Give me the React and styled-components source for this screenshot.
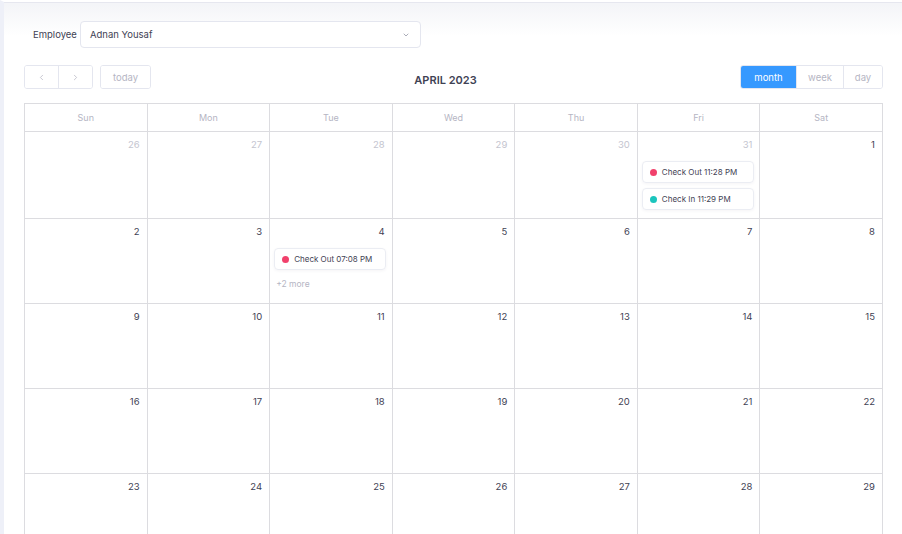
import React from 'react';
import styled, {createGlobalStyle, css} from 'styled-components';

const text_color = "#3f4254";
const muted_color = "#b5b5c3";
const border_color = "#dcdce0";
const input_border = "#e4e6ef";
const primary_color = "#3699ff";
const font_family = "'Inter', 'Noto Sans', sans-serif";

const GlobalStyle = createGlobalStyle`
  html, body{
    margin: 0;
    padding: 0;
    background: #fff;
    font-family: ${font_family};
  }
`;

const Page = styled.div`
  display: flex;
  height: 534px;
  overflow: hidden;
  border-left: 4px solid #eef0f8;
  background: linear-gradient(#f4f5f8 3px, #ffffff 34px);
  border-top: 2px solid #fff;
  box-shadow: inset 0 1px 0 #e6e7ef;
`;

const Content = styled.div`
  flex: 1;
  padding: 19px 20px 0 20px;
  display: flex;
  flex-direction: column;
`;

const FilterRow = styled.div`
  display: flex;
  align-items: center;
  padding-left: 9px;
  label{
    font-size: 9.5px;
    color: ${text_color};
    margin-right: 3px;
  }
`;

const Select = styled.div`
  width: 341px;
  height: 27px;
  box-sizing: border-box;
  border: 1px solid ${input_border};
  border-radius: 4px;
  display: flex;
  align-items: center;
  justify-content: space-between;
  padding: 0 10px 0 9px;
  font-size: 9.5px;
  color: ${text_color};
  background: #fff;
  svg{
    color: #9a9cab;
  }
`;

const Toolbar = styled.div`
  display: flex;
  justify-content: space-between;
  align-items: center;
  margin-top: 17px;
  height: 24px;
`;

const Group = styled.div`
  display: flex;
  align-items: center;
  gap: 7px;
`;

const ButtonGroup = styled.div`
  display: flex;
  border: 1px solid ${input_border};
  border-radius: 3px;
  overflow: hidden;
`;

const Btn = styled.button`
  border: none;
  margin: 0;
  outline: none;
  box-sizing: border-box;
  height: 22px;
  width: ${props => props.width || "auto"};
  padding: 0;
  background: #fff;
  color: ${muted_color};
  font-family: ${font_family};
  font-size: 9.5px;
  display: flex;
  align-items: center;
  justify-content: center;
  & + &{
    border-left: 1px solid ${input_border};
  }
  ${props => props.active && css`
    background: ${primary_color};
    color: #fff;
  `}
`;

const Title = styled.h2`
  margin: 0;
  font-size: 11px;
  font-weight: 600;
  color: ${text_color};
  padding-top: 6px;
`;

const Calendar = styled.div`
  margin-top: 14px;
  width: 858px;
  display: grid;
  grid-template-columns: repeat(7, 1fr);
  grid-template-rows: 28px 87px repeat(4, 85px);
  border-left: 1px solid ${border_color};
  border-top: 1px solid ${border_color};
`;

const HeadCell = styled.div`
  border-right: 1px solid ${border_color};
  border-bottom: 1px solid ${border_color};
  display: flex;
  align-items: center;
  justify-content: center;
  font-size: 9px;
  color: ${muted_color};
`;

const DayCell = styled.div`
  border-right: 1px solid ${border_color};
  border-bottom: 1px solid ${border_color};
  display: flex;
  flex-direction: column;
  padding: 6px 5px 0 4px;
  box-sizing: border-box;
  min-width: 0;
`;

const DayNum = styled.div`
  text-align: right;
  font-size: 9.5px;
  line-height: 14px;
  padding-right: 2px;
  color: ${props => props.other ? "#c4c5cf" : text_color};
  margin-bottom: 9px;
`;

const Event = styled.div`
  display: flex;
  align-items: center;
  height: 22px;
  box-sizing: border-box;
  border: 1px solid #ebedf3;
  border-radius: 4px;
  box-shadow: 0 1px 3px rgba(82, 63, 105, 0.06);
  padding-left: 7px;
  margin-bottom: 5px;
  font-size: 8px;
  color: ${text_color};
  white-space: nowrap;
  width: 112px;
  &:before{
    content: "";
    width: 7px;
    height: 7px;
    border-radius: 50%;
    background: ${props => props.dot};
    margin-right: 5px;
    flex-shrink: 0;
  }
`;

const More = styled.div`
  font-size: 8.5px;
  color: ${muted_color};
  padding-left: 2px;
  margin-top: 4px;
`;

const days = ["Sun", "Mon", "Tue", "Wed", "Thu", "Fri", "Sat"];

const red = "#f1416c";
const teal = "#1bc5bd";

const events = {
  "prev-31": [
    {label: "Check Out 11:28 PM", dot: red},
    {label: "Check In 11:29 PM", dot: teal}
  ],
  "4": [
    {label: "Check Out 07:08 PM", dot: red}
  ]
};

// only the five weeks that fit in the window are drawn
function buildCells() {
  const cells = [];
  [26, 27, 28, 29, 30, 31].forEach(n => cells.push({n, other: true, key: "prev-" + n}));
  for (let i = 1; i <= 29; i++) cells.push({n: i, key: String(i)});
  return cells;
}

function ChevronDown() {
  return (
    <svg width="8" height="8" viewBox="0 0 24 24" fill="none" stroke="currentColor" strokeWidth="2.5" strokeLinecap="round" strokeLinejoin="round">
      <path d="M6 9l6 6 6-6"/>
    </svg>
  );
}

function Chevron({dir}) {
  return (
    <svg width="9" height="9" viewBox="0 0 24 24" fill="none" stroke="currentColor" strokeWidth="2" strokeLinecap="round" strokeLinejoin="round">
      {dir === "left" ? <path d="M15 6l-6 6 6 6"/> : <path d="M9 6l6 6-6 6"/>}
    </svg>
  );
}

export default function App() {
  const cells = buildCells();
  return (
    <Page>
      <GlobalStyle/>
      <Content>
        <FilterRow>
          <label>Employee</label>
          <Select>
            <span>Adnan Yousaf</span>
            <ChevronDown/>
          </Select>
        </FilterRow>
        <Toolbar>
          <Group>
            <ButtonGroup>
              <Btn width="33px"><Chevron dir="left"/></Btn>
              <Btn width="34px"><Chevron dir="right"/></Btn>
            </ButtonGroup>
            <ButtonGroup>
              <Btn width="49px">today</Btn>
            </ButtonGroup>
          </Group>
          <Title>APRIL 2023</Title>
          <ButtonGroup>
            <Btn active width="55px">month</Btn>
            <Btn width="47px">week</Btn>
            <Btn width="39px">day</Btn>
          </ButtonGroup>
        </Toolbar>
        <Calendar>
          {days.map(d => <HeadCell key={d}>{d}</HeadCell>)}
          {cells.map(c => (
            <DayCell key={c.key}>
              <DayNum other={c.other}>{c.n}</DayNum>
              {(events[c.key] || []).map(e => <Event key={e.label} dot={e.dot}>{e.label}</Event>)}
              {c.key === "4" && <More>+2 more</More>}
            </DayCell>
          ))}
        </Calendar>
      </Content>
    </Page>
  );
}
